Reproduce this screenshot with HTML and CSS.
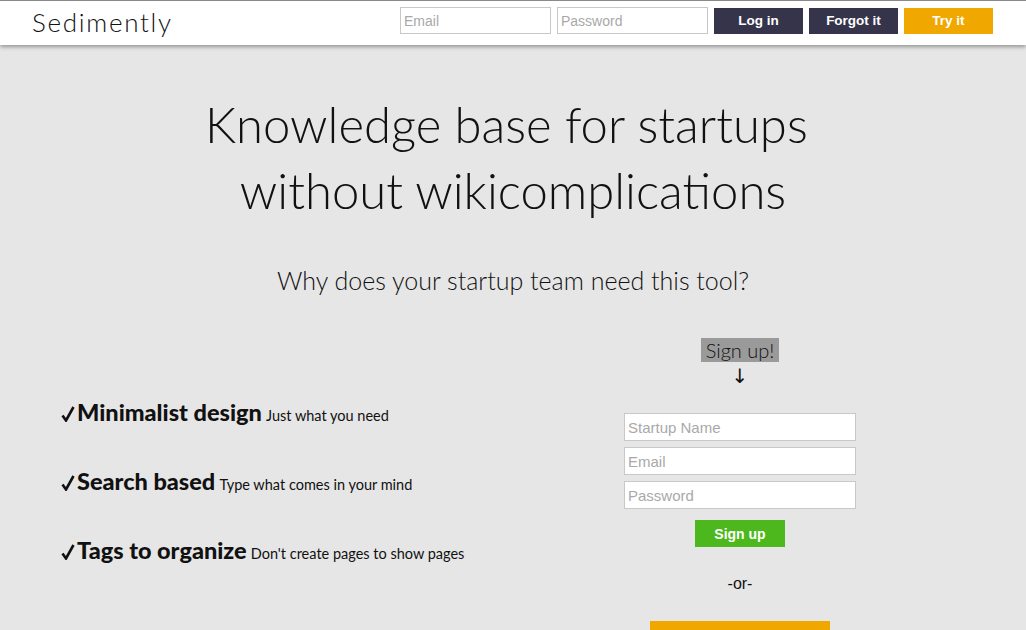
FILE: index.html
```html
<!DOCTYPE html>
<html>
<head>
<meta charset="utf-8">
<link rel="stylesheet" href="styles.css">
</head>
<body>
<header class="topbar">
  <div class="logo">Sedimently</div>
  <form class="login">
    <input class="field" type="text" placeholder="Email">
    <input class="field" type="password" placeholder="Password">
    <button class="btn btn-dark" type="button">Log in</button>
    <button class="btn btn-dark" type="button">Forgot it</button>
    <button class="btn btn-orange" type="button">Try it</button>
  </form>
</header>
<main class="main">
  <h1 class="title">Knowledge base for startups&nbsp;<br>without wikicomplications</h1>
  <h2 class="subtitle">Why does your startup team need this tool?</h2>
  <section class="content">
    <ul class="features">
      <li class="feature"><svg class="check" width="14" height="16" viewBox="0 0 14 16"><path d="M1.5 9.5 L5 14.5 L12.5 1" fill="none" stroke="#111" stroke-width="2.6" stroke-linejoin="miter"/></svg><b class="feat-name">Minimalist design</b> <span class="feat-desc">Just what you need</span></li>
      <li class="feature"><svg class="check" width="14" height="16" viewBox="0 0 14 16"><path d="M1.5 9.5 L5 14.5 L12.5 1" fill="none" stroke="#111" stroke-width="2.6" stroke-linejoin="miter"/></svg><b class="feat-name">Search based</b> <span class="feat-desc">Type what comes in your mind</span></li>
      <li class="feature"><svg class="check" width="14" height="16" viewBox="0 0 14 16"><path d="M1.5 9.5 L5 14.5 L12.5 1" fill="none" stroke="#111" stroke-width="2.6" stroke-linejoin="miter"/></svg><b class="feat-name">Tags to organize</b> <span class="feat-desc">Don't create pages to show pages</span></li>
    </ul>
    <div class="signup">
      <span class="signup-label">Sign up!</span>
      <span class="arrow">↓</span>
      <div class="signup-fields">
        <input class="sfield" type="text" placeholder="Startup Name">
        <input class="sfield" type="text" placeholder="Email">
        <input class="sfield" type="password" placeholder="Password">
      </div>
      <button class="btn btn-green" type="button">Sign up</button>
      <div class="or">-or-</div>
      <div class="alt-btn"></div>
    </div>
  </section>
</main>
</body>
</html>
```
FILE: styles.css
```css
html, body {
  margin: 0;
  padding: 0;
}
body {
  background: #e6e6e6;
  font-family: "Lato", "Open Sans", sans-serif;
  color: #111;
  height: 630px;
  overflow: hidden;
}
.topbar {
  box-sizing: content-box;
  background: #fff;
  border-top: 1px solid #8a8a8a;
  box-shadow: 0 2px 4px rgba(0,0,0,0.35);
  display: flex;
  align-items: center;
  justify-content: space-between;
  padding: 0 33px 5px 32px;
  height: 39px;
  position: relative;
  z-index: 2;
}
.logo {
  font-family: "Lato", sans-serif;
  font-weight: 300;
  font-size: 26px;
  letter-spacing: 1.7px;
  color: #111;
  margin-top: 2px;
}
.login {
  display: flex;
  align-items: center;
  gap: 6px;
  margin: 0;
}
.field {
  width: 151px;
  height: 27px;
  box-sizing: border-box;
  border: 1px solid #c8c8c8;
  padding: 0 3px;
  font-family: "Liberation Sans", Arial, sans-serif;
  font-size: 14px;
  color: #333;
  background: #fff;
}
.field::placeholder, .sfield::placeholder {
  color: #a9a9a9;
}
.btn {
  width: 89px;
  height: 26px;
  border: none;
  font-family: "Liberation Sans", Arial, sans-serif;
  font-weight: bold;
  font-size: 13.5px;
  color: #fff;
  padding: 0;
  cursor: pointer;
}
.btn-dark { background: #35344b; }
.btn-orange { background: #f0a800; }
.btn-green { background: #4cb81e; width: 90px; height: 27px; font-size: 14px; }

.main {
  display: flex;
  flex-direction: column;
  align-items: center;
}
.title {
  margin: 46px 0 0 0;
  font-weight: 300;
  font-size: 49px;
  line-height: 66px;
  text-align: center;
  color: #111;
}
.subtitle {
  margin: 41px 0 0 0;
  font-weight: 300;
  font-size: 25px;
  line-height: 32px;
  text-align: center;
  color: #111;
}
.content {
  align-self: stretch;
  display: flex;
  margin-top: 42px;
}
.features {
  list-style: none;
  margin: 0;
  padding: 60px 0 0 61px;
  width: 624px;
  box-sizing: border-box;
  display: flex;
  flex-direction: column;
  gap: 41px;
}
.feature {
  height: 28px;
  line-height: 28px;
  white-space: nowrap;
}
.check {
  margin-right: 2px;
  vertical-align: -1px;
}
.feat-name {
  font-weight: 900;
  font-size: 23.5px;
}
.feat-desc {
  font-weight: 400;
  font-size: 14.5px;
}
.signup {
  width: 232px;
  display: flex;
  flex-direction: column;
  align-items: center;
}
.signup-label {
  background: #9a9a9a;
  font-weight: 300;
  font-size: 20px;
  line-height: 24px;
  padding: 0 5px;
}
.arrow {
  font-family: "DejaVu Sans", sans-serif;
  font-size: 20px;
  line-height: 28px;
}
.signup-fields {
  margin-top: 23px;
  display: flex;
  flex-direction: column;
  gap: 6px;
  align-self: stretch;
}
.sfield {
  height: 28px;
  box-sizing: border-box;
  border: 1px solid #c8c8c8;
  background: #fff;
  padding: 0 3px;
  font-family: "Liberation Sans", Arial, sans-serif;
  font-size: 15px;
}
.signup .btn-green { margin-top: 11px; }
.or {
  margin-top: 27px;
  font-family: "Liberation Sans", Arial, sans-serif;
  font-size: 16px;
  line-height: 20px;
}
.alt-btn {
  margin-top: 27px;
  width: 180px;
  height: 30px;
  background: #f0a800;
}
```
